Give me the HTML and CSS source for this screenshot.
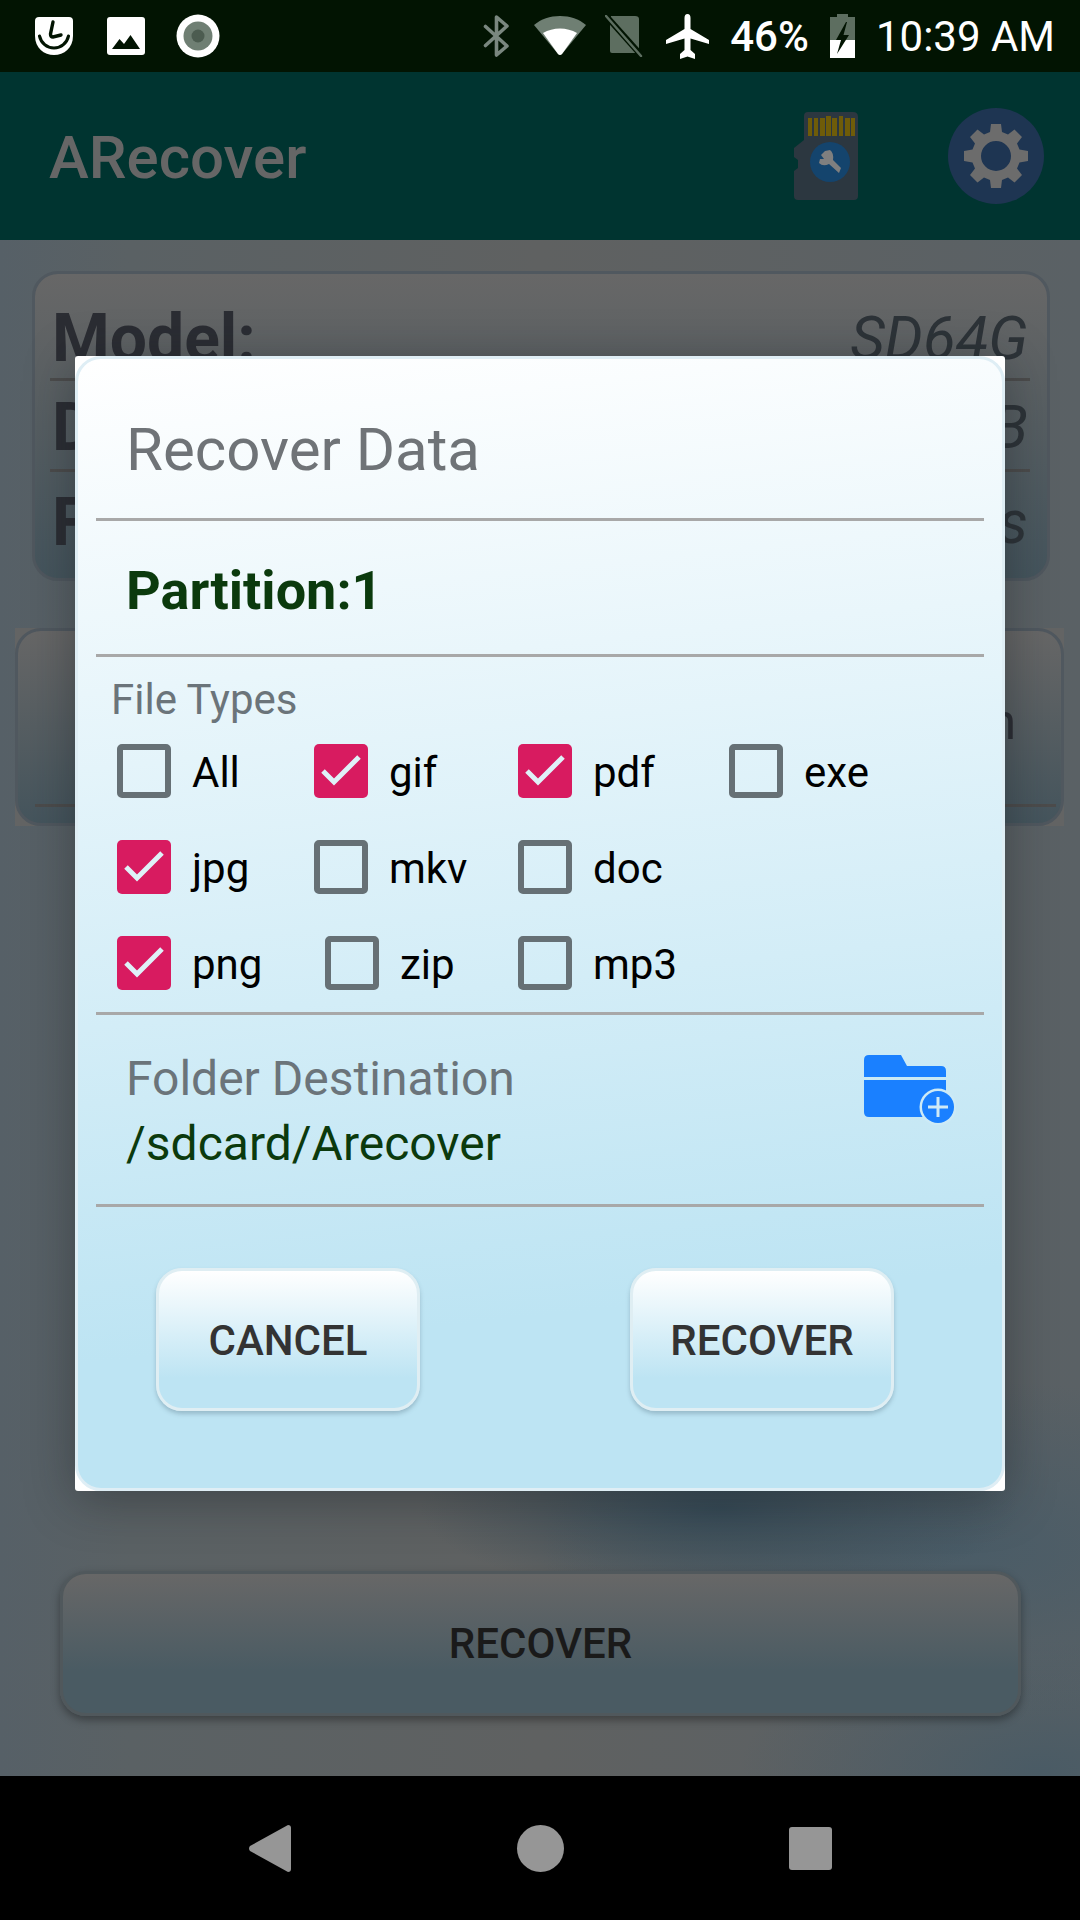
FILE: index.html
```html
<!DOCTYPE html>
<html lang="en">
<head>
    <meta charset="UTF-8">
    <meta name="viewport" content="width=device-width, initial-scale=1.0">
    <title>ARecover</title>
    <link rel="stylesheet" href="styles.css">
</head>
<body>
    <div class="screen">
        <div class="status-bar">
            <div class="status-left">
                <svg class="ic-shield" width="38" height="38" viewBox="0 0 38 38">
                    <path d="M4 0H34Q38 0 38 4V19C38 31 29 38 19 38S0 31 0 19V4Q0 0 4 0Z" fill="#fff"/>
                    <path d="M18 5 15.5 17Q15.5 20 18 20L26 18" fill="none" stroke="#021402" stroke-width="3.4" stroke-linecap="round"/>
                    <path d="M4.5 19C6 26 12 31 19 31S32 26 33.5 19" fill="none" stroke="#021402" stroke-width="3.2" stroke-linecap="round"/>
                </svg>
                <svg class="ic-image" width="38" height="38" viewBox="0 0 38 38">
                    <rect width="38" height="38" rx="3" fill="#fff"/>
                    <path d="M5 32 12.5 22 17 27 23.5 18 33 32Z" fill="#021402"/>
                </svg>
                <svg class="ic-ring" width="44" height="44" viewBox="0 0 44 44">
                    <circle cx="22" cy="22" r="21.5" fill="#fff"/>
                    <circle cx="22" cy="22" r="14.5" fill="#6f7f73"/>
                    <circle cx="22" cy="22" r="6.5" fill="#4c5c50"/>
                </svg>
            </div>
            <div class="status-right">
                <svg class="ic-bt" width="27" height="42" viewBox="0 0 27 42">
                    <path d="M2.5 11.5 24 31 13.5 40V2L24 11 2.5 30.5" fill="none" stroke="#7a877f" stroke-width="3.6" stroke-linecap="round" stroke-linejoin="round"/>
                </svg>
                <svg class="ic-wifi" width="52" height="40" viewBox="0 0 52 40">
                    <path d="M0 9C7 3 16 0 26 0S45 3 52 9L28 38Q26 40 24 38Z" fill="#6f7f73"/>
                    <path d="M9 17C14 14 20 12.5 26 12.5S38 14 43 17L28 38Q26 40 24 38Z" fill="#fff"/>
                </svg>
                <svg class="ic-sim" width="38" height="42" viewBox="0 0 38 42">
                    <path d="M6 1H30Q34 1 34 4V36Q34 38 32 38H7Q5 38 5 36V7Z" fill="#5d6e60"/>
                    <path d="M2 2 36 40" stroke="#021402" stroke-width="6"/>
                    <path d="M1 1 36 41" stroke="#5d6e60" stroke-width="2.5" stroke-linecap="round"/>
                </svg>
                <svg class="ic-plane" width="43" height="45" viewBox="0 0 43 45">
                    <path d="M21.5 0Q24.5 0 24.5 4V15L43 26V30L24.5 24.5V36L29 40V45L21.5 42.5 14 45V40L18.5 36V24.5L0 30V26L18.5 15V4Q18.5 0 21.5 0Z" fill="#fff"/>
                </svg>
                <span class="status-pct">46%</span>
                <svg class="ic-batt" width="25" height="44" viewBox="0 0 25 44">
                    <path d="M7 0H18V3H25V26H0V3H7Z" fill="#5d6e60"/>
                    <path d="M0 26H25V44H0Z" fill="#fff"/>
                    <path d="M16 8 6 26H11L7 40 19 21H13.5L17 8Z" fill="#021402"/>
                </svg>
                <span class="status-time">10:39 AM</span>
            </div>
        </div>

        <div class="app-bar">
            <div class="app-title">ARecover</div>
            <svg class="ic-sd" width="64" height="88" viewBox="0 0 64 88">
                <path d="M14 0H59Q64 0 64 5V84Q64 88 60 88H4Q0 88 0 84V59L4 56V48L0 45V36L10 28V4Q10 0 14 0Z" fill="#2c3740"/>
                <g fill="#6f5c09">
                    <rect x="14" y="6" width="4" height="18"/>
                    <rect x="20" y="6" width="4" height="18"/>
                    <rect x="26" y="6" width="5" height="18"/>
                    <rect x="32" y="4" width="5" height="20"/>
                    <rect x="38" y="6" width="5" height="18"/>
                    <rect x="45" y="4" width="4" height="20"/>
                    <rect x="51" y="6" width="5" height="18"/>
                    <rect x="57" y="6" width="4" height="18"/>
                </g>
                <circle cx="36" cy="50" r="20" fill="#14446d"/>
                <path d="M31 39 27 43 30 47 26 47 25 51Q29 55 35 52L45 61 47 56 39 48Q40 41 36 38Z" fill="#7f7f7f"/>
            </svg>
            <div class="gear-btn">
                <svg width="64" height="64" viewBox="0 0 64 64">
                    <path fill="#6c6c6c" fill-rule="evenodd" d="M27 0H37L38 8 44 10.5 50.5 5.5 58 13 53 19.5 55.5 25.5 64 27V37L55.5 38.5 53 44.5 58 51 50.5 58.5 44 53.5 38 56 37 64H27L26 56 20 53.5 13.5 58.5 6 51 11 44.5 8.5 38.5 0 37V27L8.5 25.5 11 19.5 6 13 13.5 5.5 20 10.5 26 8ZM32 17A15 15 0 1 0 32 47 15 15 0 1 0 32 17Z"/>
                </svg>
            </div>
        </div>

        <div class="content">
            <div class="info-card">
                <div class="info-row row-model">
                    <span class="info-label">Model:</span>
                    <span class="info-value">SD64G</span>
                </div>
                <div class="info-row row-second">
                    <span class="info-label">D</span>
                    <span class="info-value">B</span>
                </div>
                <div class="info-row row-third">
                    <span class="info-label">F</span>
                    <span class="info-value">s</span>
                </div>
            </div>

            <div class="part-back">
                <div class="part-card">
                    <div class="part-row"><span class="part-value">n</span></div>
                </div>
            </div>

            <div class="main-btn">RECOVER</div>

            <div class="dialog">
                <div class="dialog-inner">
                    <div class="dialog-title">Recover Data</div>
                    <div class="dialog-part">Partition:1</div>
                    <div class="types">
                        <div class="types-label">File Types</div>
                        <div class="types-grid">
                            <label class="opt"><span class="box"></span>All</label>
                            <label class="opt"><span class="box on"><svg width="54" height="54" viewBox="0 0 54 54"><path d="M9 27 20 38 45 13" fill="none" stroke="#dff1f8" stroke-width="5"/></svg></span>gif</label>
                            <label class="opt"><span class="box on"><svg width="54" height="54" viewBox="0 0 54 54"><path d="M9 27 20 38 45 13" fill="none" stroke="#dff1f8" stroke-width="5"/></svg></span>pdf</label>
                            <label class="opt"><span class="box"></span>exe</label>
                            <label class="opt"><span class="box on"><svg width="54" height="54" viewBox="0 0 54 54"><path d="M9 27 20 38 45 13" fill="none" stroke="#dff1f8" stroke-width="5"/></svg></span>jpg</label>
                            <label class="opt"><span class="box"></span>mkv</label>
                            <label class="opt"><span class="box"></span>doc</label>
                            <span></span>
                            <label class="opt"><span class="box on"><svg width="54" height="54" viewBox="0 0 54 54"><path d="M9 27 20 38 45 13" fill="none" stroke="#dff1f8" stroke-width="5"/></svg></span>png</label>
                            <label class="opt opt-zip"><span class="box"></span>zip</label>
                            <label class="opt"><span class="box"></span>mp3</label>
                        </div>
                    </div>
                    <div class="folder">
                        <div>
                            <div class="folder-label">Folder Destination</div>
                            <div class="folder-path">/sdcard/Arecover</div>
                        </div>
                        <svg class="ic-folder" width="92" height="70" viewBox="0 0 92 70">
                            <path d="M5 0H37L43 11H77Q82 11 82 16V22H0V5Q0 0 5 0Z" fill="#1a80ff"/>
                            <path d="M0 25H82V62H5Q0 62 0 57Z" fill="#1a80ff"/>
                            <circle cx="74" cy="52" r="18.5" fill="#cdeaf6"/>
                            <circle cx="74" cy="52" r="16" fill="#1a80ff"/>
                            <path d="M64 52H84M74 42V62" stroke="#cfeaf6" stroke-width="3" fill="none"/>
                        </svg>
                    </div>
                    <div class="dialog-actions">
                        <div class="dialog-btn">CANCEL</div>
                        <div class="dialog-btn">RECOVER</div>
                    </div>
                </div>
            </div>
        </div>

        <div class="nav-bar">
            <svg width="42" height="47" viewBox="0 0 42 47"><path d="M39 0Q42 0 42 3V44Q42 47 39 47L1 26Q-1 23.5 1 21Z" fill="#969696"/></svg>
            <span class="nav-home"></span>
            <span class="nav-recent"></span>
        </div>
    </div>
</body>
</html>
```

FILE: styles.css
```css
* {
    box-sizing: border-box;
}
body {
    margin: 0;
    font-family: Roboto, "Noto Sans", sans-serif;
}
.screen {
    width: 1080px;
    height: 1920px;
    display: flex;
    flex-direction: column;
    overflow: hidden;
}

/* status bar */
.status-bar {
    height: 72px;
    background: #021402;
    color: #fff;
    display: flex;
    justify-content: space-between;
    align-items: center;
    flex-shrink: 0;
}
.status-left {
    display: flex;
    align-items: center;
    padding-left: 35px;
}
.ic-image { margin-left: 34px; }
.ic-ring { margin-left: 31px; }
.status-right {
    display: flex;
    align-items: center;
    padding-right: 25px;
}
.ic-bt { margin-right: 24px; }
.ic-wifi { margin-right: 19px; }
.ic-sim { margin-right: 23px; }
.ic-plane { margin-right: 21px; }
.status-pct {
    font-size: 42px;
    font-weight: 500;
    margin-right: 21px;
}
.ic-batt { margin-right: 21px; }
.status-time {
    font-size: 42px;
}

/* app bar */
.app-bar {
    height: 168px;
    background: #003430;
    display: flex;
    align-items: center;
    padding: 0 36px 0 49px;
    flex-shrink: 0;
}
.app-title {
    font-size: 60px;
    font-weight: 500;
    color: #666;
    margin-right: auto;
    padding-top: 2px;
}
.ic-sd { margin-right: 90px; }
.gear-btn {
    width: 96px;
    height: 96px;
    border-radius: 50%;
    background: #1e3552;
    display: flex;
    align-items: center;
    justify-content: center;
}

/* dimmed page behind the dialog */
.content {
    flex: 1;
    position: relative;
    display: flex;
    flex-direction: column;
    padding-top: 31px;
    background:
        radial-gradient(ellipse 300px 90px at 720px 1268px, #374b57 0%, rgba(55, 75, 87, 0) 100%),
        radial-gradient(ellipse 420px 170px at 960px 1310px, #4a5c67 0%, rgba(74, 92, 103, 0) 100%),
        radial-gradient(ellipse 300px 130px at 1040px 1530px, #4a5b65 0%, rgba(74, 91, 101, 0) 100%),
        linear-gradient(90deg, #566067 0%, #5a6164 12%, #5f6161 50%, #5a6165 100%);
}
.info-card {
    width: 1018px;
    height: 310px;
    margin-left: 32px;
    padding: 0 18px 0 16px;
    border: 3px solid #50585f;
    border-radius: 26px;
    background: linear-gradient(#676767, #45555d);
}
.info-row {
    display: flex;
    justify-content: space-between;
    align-items: flex-end;
    margin: 0 -1px;
    padding: 0 2px;
    border-bottom: 3px solid #4c4c4c;
    color: #2b2d33;
}
.row-model { height: 107px; padding-bottom: 8px; }
.row-second { height: 91px; padding-bottom: 10px; }
.row-third { height: 90px; padding-bottom: 8px; border-bottom: 0; }
.info-label {
    font-size: 66px;
    font-weight: 700;
    line-height: 62px;
}
.info-value {
    font-size: 60px;
    font-style: italic;
    line-height: 62px;
    color: #2d3338;
}
.part-back {
    width: 1049px;
    height: 198px;
    margin: 47px 0 0 15px;
    background: #636464;
}
.part-card {
    height: 100%;
    padding: 0 5px 0 17px;
    border: 3px solid #50585f;
    border-radius: 26px;
    background: linear-gradient(#676767, #45555d);
}
.part-row {
    height: 176px;
    display: flex;
    justify-content: flex-end;
    align-items: flex-end;
    padding: 0 40px 62px 0;
    border-bottom: 3px solid #4c4c4c;
}
.part-value {
    font-size: 50px;
    line-height: 40px;
    color: #2b2d33;
}
.main-btn {
    width: 961px;
    height: 145px;
    margin: 745px 0 0 60px;
    display: flex;
    align-items: center;
    justify-content: center;
    border: 3px solid #50585c;
    border-radius: 26px;
    background: linear-gradient(#676767, #4a5b63 70%);
    box-shadow: 0 4px 8px rgba(0, 0, 0, 0.35);
    font-size: 42px;
    font-weight: 500;
    color: #1a1a1a;
}

/* dialog */
.dialog {
    position: absolute;
    left: 75px;
    top: 116px;
    width: 930px;
    height: 1135px;
    background: #fff;
    border-radius: 3px;
    box-shadow: 0 8px 50px rgba(20, 25, 30, 0.4);
}
.dialog-inner {
    height: 100%;
    padding: 0 18px;
    background: linear-gradient(174deg, #fff 0%, #bde4f3 82%);
    border: 3px solid #dfeef5;
    border-radius: 26px;
}
.dialog-title {
    height: 162px;
    padding: 56px 0 0 30px;
    border-bottom: 3px solid #a8a8a8;
    font-size: 60px;
    line-height: 70px;
    color: #6f7377;
}
.dialog-part {
    height: 136px;
    padding: 35px 0 0 30px;
    border-bottom: 3px solid #a8a8a8;
    font-size: 54px;
    font-weight: 700;
    line-height: 70px;
    color: #0b3a0d;
}
.types {
    height: 358px;
    padding-left: 15px;
    border-bottom: 3px solid #a8a8a8;
}
.types-label {
    height: 87px;
    padding-top: 18px;
    font-size: 42px;
    line-height: 50px;
    color: #6b747a;
}
.types-grid {
    display: grid;
    grid-template-columns: 197px 204px 211px auto;
    row-gap: 42px;
    margin-left: 6px;
}
.opt {
    display: flex;
    align-items: center;
    gap: 21px;
    height: 54px;
    padding-top: 3px;
    font-size: 42px;
    color: #000;
}
.opt-zip {
    margin-left: 11px;
}
.box {
    width: 54px;
    height: 54px;
    flex-shrink: 0;
    margin-top: -3px;
    border: 6px solid #667075;
    border-radius: 5px;
}
.box.on {
    border: 0;
    background: #d81b60;
}
.box svg {
    display: block;
}
.folder {
    height: 192px;
    display: flex;
    justify-content: space-between;
    align-items: flex-start;
    padding: 36px 28px 0 30px;
    border-bottom: 3px solid #a8a8a8;
}
.folder-label {
    font-size: 48px;
    line-height: 56px;
    color: #6b747a;
}
.folder-path {
    margin-top: 9px;
    font-size: 48px;
    line-height: 56px;
    color: #0b3a0d;
}
.ic-folder {
    margin-top: 4px;
}
.dialog-actions {
    display: flex;
    justify-content: space-between;
    padding: 61px 90px 0 60px;
}
.dialog-btn {
    width: 264px;
    height: 143px;
    display: flex;
    align-items: center;
    justify-content: center;
    padding-top: 2px;
    border: 3px solid #dfeef3;
    border-radius: 26px;
    background: linear-gradient(#fff, #bde4f3 78%);
    box-shadow: 0 3px 4px rgba(80, 110, 125, 0.35);
    font-size: 42px;
    font-weight: 500;
    color: #333;
}

/* nav bar */
.nav-bar {
    height: 144px;
    background: #000;
    display: flex;
    align-items: center;
    padding-left: 249px;
    flex-shrink: 0;
}
.nav-home {
    width: 47px;
    height: 47px;
    margin-left: 226px;
    border-radius: 50%;
    background: #969696;
}
.nav-recent {
    width: 43px;
    height: 43px;
    margin-left: 225px;
    border-radius: 3px;
    background: #969696;
}
```
